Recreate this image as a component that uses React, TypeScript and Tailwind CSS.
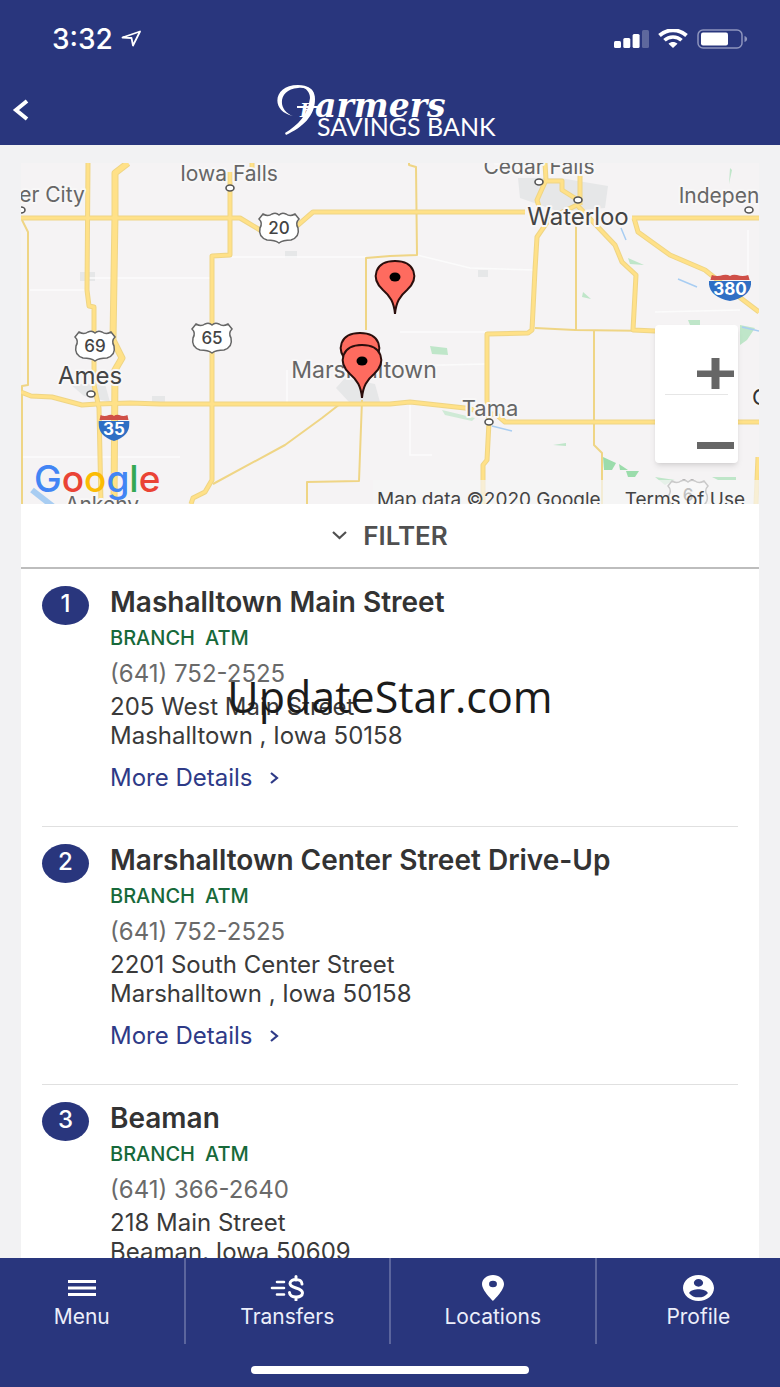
import type { ReactNode } from "react";

type Branch = {
  id: number;
  name: string;
  phone: string;
  street: string;
  city: string;
};

const branches: Branch[] = [
  {
    id: 1,
    name: "Mashalltown Main Street",
    phone: "(641) 752-2525",
    street: "205 West Main Street",
    city: "Mashalltown , Iowa 50158",
  },
  {
    id: 2,
    name: "Marshalltown Center Street Drive-Up",
    phone: "(641) 752-2525",
    street: "2201 South Center Street",
    city: "Marshalltown , Iowa 50158",
  },
  {
    id: 3,
    name: "Beaman",
    phone: "(641) 366-2640",
    street: "218 Main Street",
    city: "Beaman, Iowa 50609",
  },
];

const StatusBar = () => (
  <div className="flex h-[77px] items-center justify-between pl-[52px] pr-8 text-white">
    <div className="flex items-center gap-2">
      <span className="text-[28px] font-medium leading-8">3:32</span>
      <svg width="21" height="17" viewBox="0 0 21 17" fill="none">
        <path
          d="M1.5 7.5 19 1.5 12 15.5 10.5 8Z"
          stroke="white"
          strokeWidth="1.8"
          strokeLinejoin="round"
        />
      </svg>
    </div>
    <div className="flex items-center gap-[9px]">
      <svg width="35" height="19" viewBox="0 0 35 19" fill="white">
        <rect x="0" y="12" width="7" height="7" rx="1.5" />
        <rect x="9.300" y="9" width="7" height="10" rx="1.5" />
        <rect x="18.600" y="5" width="7" height="14" rx="1.5" />
        <rect x="28" y="1" width="7" height="18" rx="1.5" opacity="0.25" />
      </svg>
      <svg width="30" height="19" viewBox="0 0 30 19" fill="none">
        <path d="M1.500 6.500C9-.5 21-.5 28.500 6.500" stroke="white" strokeWidth="3.800" />
        <path d="M6.500 11.300C11 6.800 19 6.800 23.500 11.300" stroke="white" strokeWidth="3.500" />
        <path d="M10.500 14.800C13 12.500 17 12.500 19.500 14.800L15 19Z" fill="white" />
      </svg>
      <svg width="51" height="20" viewBox="0 0 51 20">
        <rect
          x="1"
          y="1"
          width="44"
          height="18"
          rx="5"
          fill="none"
          stroke="#8d94bd"
          strokeWidth="1.500"
        />
        <rect x="4" y="3.500" width="27" height="13" rx="2" fill="white" />
        <path d="M47.500 7C51 8 51 12 47.500 13Z" fill="#8d94bd" />
      </svg>
    </div>
  </div>
);

const Logo = () => (
  <svg width="228" height="56" viewBox="0 0 228 56" fill="white" role="img">
    {/* swash that curls over the wordmark */}
    <path d="M17 33C1 28 2 6 22 5 31 4 37 8 37 20 41 8 34 2 22 2-3 2-6 28 17 33Z" />
    <path d="M39 16C39 33 27 44 10 52L9 50C22 42 32 32 34 15 34 9 30 5 25 4 34 3 39 8 39 16Z" />
    <path d="M21 23H42V25H21Z" />
    <text
      x="24"
      y="34"
      fontSize="33"
      fontStyle="italic"
      fontWeight="700"
      fontFamily="DejaVu Serif, serif"
    >
      <tspan fontSize="18">F</tspan>
      <tspan x="39">armers</tspan>
    </text>
    <text x="41" y="53" fontSize="25" fontFamily="Lato, sans-serif">
      SAVINGS BANK
    </text>
  </svg>
);

const Header = () => (
  <header className="shrink-0 bg-[#29367d]">
    <StatusBar />
    <div className="relative flex h-[68px] items-center justify-center">
      <button aria-label="Back" className="absolute left-3 top-[22px]">
        <svg width="18" height="22" viewBox="0 0 18 22" fill="none">
          <path d="M15 2 4 11 15 20" stroke="white" strokeWidth="4" />
        </svg>
      </button>
      <Logo />
    </div>
  </header>
);

const thickRoads = [
  "M128 163 115 173V215L113 340 122 358 115 370 114 504",
];

const mediumRoads = [
  "M21 218H240L260 230 278 234 298 225 313 212H525",
  "M632 218H759",
  "M634 218 638 232 670 255 705 270 730 290 759 312",
  "M88 163 87 290 89 306 94 307V385L99 408 101 504",
  "M252 163V168",
  "M230 172V255L212 256V480L205 492 193 498 191 504",
  "M21 392 31 396 52 397 82 405 97 404 130 403 160 404H390L410 402 465 408 497 415 505 422H759",
  "M577 205 550 218 537 237 535 270 532 330 528 333 487 334V400L489 422 487 460 483 465V504",
  "M577 205 615 245 622 262 636 275 633 330 655 331",
  "M545 163 546 180 537 200 540 210",
  "M546 181H562V190L578 200",
  "M580 175V205",
  "M758 457 756 504",
];

const thinRoads = [
  "M22 220 28 232V385L22 386V504",
  "M366 330V258L390 256 417 255 416 167 409 165V163",
  "M340 404 322 418 285 445 213 484",
  "M362 400 359 481 307 482V504",
  "M576 225V330",
  "M535 328 575 330 655 331",
  "M594 331V445L602 453V504",
];

const Shield = ({ x, y, label }: { x: number; y: number; label: string }) => (
  <g transform={`translate(${x} ${y})`}>
    <path
      d="M-16-14Q-11-11-7-14-3-16 0-13 3-16 7-14 11-11 16-14L20-9Q16-5 19 0 21 9 12 12 4 12 0 15-4 12-12 12-21 9-19 0-16-5-20-9Z"
      fill="white"
      stroke="#666"
      strokeWidth="1.500"
    />
    <text y="6" fontSize="17" textAnchor="middle" fill="#444" fontWeight="500">
      {label}
    </text>
  </g>
);

const Interstate = ({
  x,
  y,
  width,
  label,
}: {
  x: number;
  y: number;
  width: number;
  label: string;
}) => (
  <g>
    <svg x={x - width / 2} y={y - 14} width={width} height="27" viewBox="0 0 30 27" preserveAspectRatio="none">
      <path d="M2 1Q6 3 10 1 13 0 15 2 17 0 20 1 24 3 28 1L29 6H1Z" fill="#cf4f47" />
      <path d="M0 7H30Q31 22 15 27-1 22 0 7Z" fill="#2f6fc4" />
    </svg>
    <text x={x} y={y + 7} fontSize="17" textAnchor="middle" fill="white" fontWeight="700">
      {label}
    </text>
  </g>
);

const Pin = ({ x, y }: { x: number; y: number }) => (
  <g transform={`translate(${x} ${y})`}>
    <path
      d="M0 0C-1-12-5-18-12-24-25-36-20-53 0-53S25-36 12-24C5-18 1-12 0 0Z"
      fill="#fe6b5f"
      stroke="#2b0e0c"
      strokeWidth="2"
    />
    <ellipse cy="-37" rx="5.500" ry="4.500" fill="black" />
  </g>
);

const Place = ({
  x,
  y,
  size = 21,
  color = "#666",
  children,
}: {
  x: number;
  y: number;
  size?: number;
  color?: string;
  children: ReactNode;
}) => (
  <text
    x={x}
    y={y}
    fontSize={size}
    fill={color}
    stroke="#f8f7f7"
    strokeWidth="4"
    paintOrder="stroke"
    strokeLinejoin="round"
    textAnchor="middle"
  >
    {children}
  </text>
);

const towns = [
  [230, 188],
  [21, 210],
  [539, 182],
  [578, 200],
  [749, 210],
  [91, 394],
  [489, 422],
];

const MapDrawing = () => (
  <svg
    viewBox="21 163 738 341"
    preserveAspectRatio="xMidYMid slice"
    className="block h-full w-full"
    fontFamily="Inter, sans-serif"
  >
    <rect x="0" y="140" width="780" height="400" fill="#f5f3f4" />
    <g fill="#e6e7e8">
      <path d="M518 178H560L608 186 605 208 560 212 520 198Z" />
      <path d="M336 388 345 378 375 384 380 402 350 403Z" />
      <path d="M70 384H105L110 402 84 396Z" />
      <path d="M80 272H95V281H80ZM285 251H297V258H285ZM152 396H165V402H152ZM478 270H488V277H478Z" />
    </g>
    <g stroke="#fbfbfb" strokeWidth="1.500" fill="none">
      <path d="M30 290H85M88 278H212M232 257H366M417 255 470 268 535 270M410 404V455H432M21 457H180" />
      <path d="M400 332H487M287 404V370M655 312 740 310M400 366 487 364M748 230V290" />
    </g>
    <g fill="#bfe6c9">
      <path d="M430 346 447 348 448 355 432 354Z" />
      <path d="M442 410 475 418 472 421 445 415Z" opacity="0.7" />
      <path d="M628 258 644 265 630 264ZM583 292 591 299 582 297ZM553 445 566 443V446Z" />
      <path d="M688 320H700V325H690ZM740 325 755 328 747 340 740 345Z" />
      <path d="M603 457 616 463 612 470H604Z" fill="#9bdcab" />
      <path d="M619 464 628 470 620 470ZM626 471H639L635 477H628Z" fill="#9bdcab" />
      <path d="M655 477 675 480 665 485ZM712 477H736V480H718ZM730 168 732 170 729 184Z" />
    </g>
    <g fill="none" stroke="#a8cdf2" strokeWidth="1.500">
      <path d="M621 228 626 240M678 279 697 287M742 327 759 331M492 426 512 431" />
      <path d="M32 490 55 508" strokeWidth="6" />
    </g>

    <g fill="none" strokeLinejoin="round">
      <g stroke="#efd585">
        {thinRoads.map((d) => (
          <path key={d} d={d} strokeWidth="2" />
        ))}
        {mediumRoads.map((d) => (
          <path key={d} d={d} strokeWidth="5" />
        ))}
        {thickRoads.map((d) => (
          <path key={d} d={d} strokeWidth="7" />
        ))}
      </g>
      <g stroke="#ffe188">
        {mediumRoads.map((d) => (
          <path key={d} d={d} strokeWidth="3" />
        ))}
        {thickRoads.map((d) => (
          <path key={d} d={d} strokeWidth="5" />
        ))}
      </g>
    </g>

    {towns.map(([x, y]) => (
      <ellipse
        key={`${x}-${y}`}
        cx={x}
        cy={y}
        rx="4"
        ry="3"
        fill="white"
        stroke="#555"
        strokeWidth="1.600"
      />
    ))}

    <Place x={229} y={181}>Iowa Falls</Place>
    <Place x={52} y={202}>er City</Place>
    <Place x={539} y={174}>Cedar Falls</Place>
    <Place x={578} y={225} size={24} color="#444">Waterloo</Place>
    <Place x={719} y={203}>Indepen</Place>
    <Place x={90} y={384} size={24} color="#444">Ames</Place>
    <Place x={364} y={378} size={23}>Marshalltown</Place>
    <Place x={490} y={416} size={22}>Tama</Place>
    <Place x={102} y={512}>Ankeny</Place>
    <Place x={760} y={405} size={22} color="#333">C</Place>

    <Shield x={279} y={228} label="20" />
    <Shield x={212} y={338} label="65" />
    <Shield x={95} y={346} label="69" />
    <Shield x={688} y={495} label="6" />
    <Interstate x={114} y={428} width={31} label="35" />
    <Interstate x={730} y={288} width={42} label="380" />

    <Pin x={395} y={314} />
    <Pin x={360} y={386} />
    <Pin x={362} y={398} />

    <text x="34" y="492" fontSize="37" fontWeight="500">
      <tspan fill="#4285f4">G</tspan>
      <tspan fill="#ea4335">o</tspan>
      <tspan fill="#fbbc05">o</tspan>
      <tspan fill="#4285f4">g</tspan>
      <tspan fill="#34a853">l</tspan>
      <tspan fill="#ea4335">e</tspan>
    </text>
  </svg>
);

const MapView = () => (
  <section className="relative h-[341px] overflow-hidden">
    <MapDrawing />
    <div className="absolute right-[21px] top-[162px] flex h-[138px] w-[83px] flex-col rounded-sm bg-white shadow-md">
      <button aria-label="Zoom in" className="flex h-[69px] items-center justify-end pr-1 pt-7">
        <svg width="37" height="31" viewBox="0 0 37 31" fill="#666">
          <path d="M14.500 0H22.500V12.500H37V19H22.500V31H14.500V19H0V12.500H14.500Z" />
        </svg>
      </button>
      <div className="mx-[10px] h-px shrink-0 bg-[#e6e6e6]" />
      <button aria-label="Zoom out" className="flex h-[68px] items-center justify-end pr-1 pt-8">
        <svg width="37" height="7" viewBox="0 0 37 7" fill="#666">
          <path d="M0 0H37V7H0Z" />
        </svg>
      </button>
    </div>
    <div className="absolute bottom-0 right-0 flex h-6 gap-6 overflow-hidden bg-[#f5f5f5]/70 pl-1 pr-[14px] pt-1 text-[19px] leading-8 text-[#444]">
      <span>Map data ©2020 Google</span>
      <a href="#terms">Terms of Use</a>
    </div>
  </section>
);

const BranchItem = ({ branch }: { branch: Branch }) => (
  <li className="flex gap-[21px] border-b border-[#e0e0e0] pb-8 pt-[17px] text-[24px] text-[#3a3a3a]">
    <span className="flex h-[39px] w-[47px] shrink-0 items-center justify-center rounded-[50%] bg-[#29367d] pb-1 font-medium text-white">
      {branch.id}
    </span>
    <div>
      <h2 className="text-[28px] font-semibold leading-8 text-[#333]">{branch.name}</h2>
      <p className="mt-1 flex gap-[10px] text-[20px] font-medium leading-8 text-[#17693a]">
        <span>BRANCH</span>
        <span>ATM</span>
      </p>
      <p className="mt-1 leading-8 text-[#6a6a6a]">{branch.phone}</p>
      <address className="mt-[2px] leading-[29px] not-italic">
        {branch.street}
        <br />
        {branch.city}
      </address>
      <a href={`#branch-${branch.id}`} className="mt-3 flex items-center gap-4 leading-8 text-[#2e3a87]">
        More Details
        <svg width="10" height="12" viewBox="0 0 10 12" fill="none">
          <path d="M2 1 8 6 2 11" stroke="currentColor" strokeWidth="2.200" />
        </svg>
      </a>
    </div>
  </li>
);

const icons = {
  menu: (
    <svg width="30" height="26" viewBox="0 0 30 26" fill="white">
      <path d="M1 5H29V8H1ZM1 11.500H29V14.500H1ZM1 18H29V21H1Z" />
    </svg>
  ),
  transfers: (
    <svg width="34" height="26" viewBox="0 0 34 26" fill="none" stroke="white" strokeLinecap="round">
      <path d="M7 7H14M2 13H14M7 19.500H14" strokeWidth="2.600" />
      <path
        d="M32 9C32 3 20 3 20 8.500 20 14 32.500 12 32.500 18 32.500 23.500 19.500 23.500 19.500 17.500M26 1.500V5M26 22V25"
        strokeWidth="3"
      />
    </svg>
  ),
  locations: (
    <svg width="22" height="26" viewBox="5 2 14 20" preserveAspectRatio="none" fill="white">
      <path d="M12 2C8.130 2 5 5.130 5 9c0 5.250 7 13 7 13s7-7.750 7-13c0-3.870-3.130-7-7-7zm0 9.500a2.500 2.500 0 1 1 0-5 2.500 2.500 0 0 1 0 5z" />
    </svg>
  ),
  profile: (
    <svg width="31" height="26" viewBox="2 2 20 20" preserveAspectRatio="none" fill="white">
      <path d="M12 2C6.480 2 2 6.480 2 12s4.480 10 10 10 10-4.480 10-10S17.520 2 12 2zm0 3c1.660 0 3 1.340 3 3s-1.340 3-3 3-3-1.340-3-3 1.340-3 3-3zm0 14.200a7.200 7.200 0 0 1-6-3.220c.03-1.990 4-3.080 6-3.080s5.970 1.090 6 3.080a7.200 7.200 0 0 1-6 3.220z" />
    </svg>
  ),
};

const NavLink = ({ icon, label }: { icon: ReactNode; label: string }) => (
  <a
    href={`#${label.toLowerCase()}`}
    className="flex h-[86px] flex-col items-center border-r-2 border-[#5b659d] pt-[17px] text-[21px] leading-8 text-[#eceefa]"
  >
    {icon}
    {label}
  </a>
);

const BottomNav = () => (
  <footer className="h-[129px] shrink-0 overflow-hidden bg-[#29367d]">
    <nav className="-ml-5 -mr-[22px] grid grid-cols-4">
      <NavLink icon={icons.menu} label="Menu" />
      <NavLink icon={icons.transfers} label="Transfers" />
      <NavLink icon={icons.locations} label="Locations" />
      <NavLink icon={icons.profile} label="Profile" />
    </nav>
    <div className="mx-auto mt-[22px] h-2 w-[278px] rounded-full bg-white" />
  </footer>
);

export default function App() {
  return (
    <div className="relative flex h-screen flex-col overflow-hidden bg-[#f2f2f3] font-['Inter',sans-serif]">
      <Header />
      <main className="min-h-0 flex-1 overflow-hidden px-[21px] pt-[18px]">
        <MapView />
        <div className="bg-white">
          <button className="flex h-[65px] w-full items-center justify-center gap-4 border-b-2 border-[#bdbdbd] text-[26px] font-semibold text-[#505050]">
            <svg width="15" height="10" viewBox="0 0 15 10" fill="none">
              <path d="M1 1 7.500 7 14 1" stroke="currentColor" strokeWidth="2.200" />
            </svg>
            FILTER
          </button>
          <ul className="px-[21px]">
            {branches.map((branch) => (
              <BranchItem key={branch.id} branch={branch} />
            ))}
          </ul>
        </div>
      </main>
      <BottomNav />
      <div className="pointer-events-none absolute inset-0 flex items-center justify-center pt-2 font-['Open_Sans',sans-serif] text-[43px] text-[#1b1b1b]">
        UpdateStar.com
      </div>
    </div>
  );
}
